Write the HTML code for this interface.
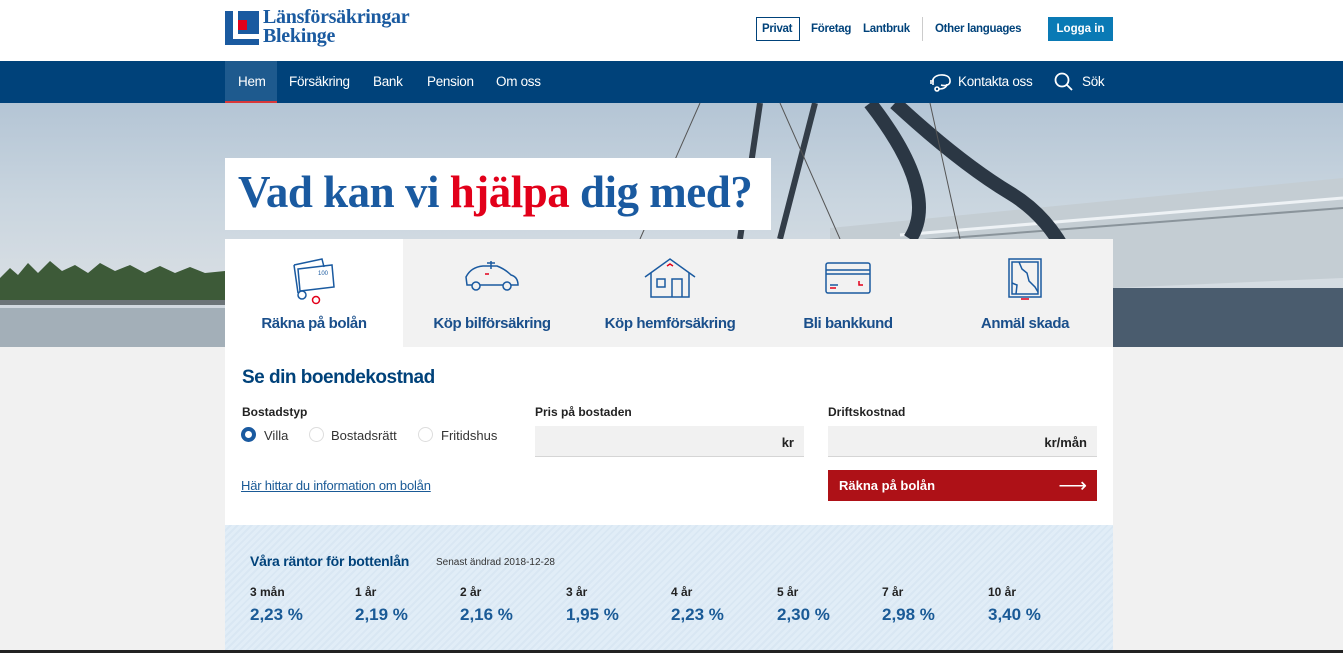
<!DOCTYPE html>
<html><head><meta charset="utf-8"><style>
*{margin:0;padding:0;box-sizing:border-box}
body{width:1343px;height:653px;overflow:hidden;background:#f1f1f1;font-family:"Liberation Sans",sans-serif;position:relative}
.abs{position:absolute}
.hdr{left:0;top:0;width:1343px;height:61px;background:#fff}
.nav{left:0;top:61px;width:1343px;height:42px;background:#00427a;color:#fff;font-size:13.5px}
.nav span{position:absolute;top:13px;letter-spacing:-0.3px}
.hero{left:0;top:103px;width:1343px;height:244px;background:linear-gradient(180deg,#b4c5d5 0%,#c9d5df 40%,#d6dde3 70%,#cbd3da 100%);overflow:hidden}
.tl{color:#00427a;font-weight:bold;font-size:11.5px;line-height:14px;top:22px;letter-spacing:-0.3px}
.tab{position:absolute;top:239px;height:108px;width:178px;background:#f2f2f2;text-align:center}
.tab b{position:absolute;left:0;right:0;top:76px;font-size:15px;color:#1a4f8b;letter-spacing:-0.4px}
.tab svg{position:absolute;left:50%;transform:translateX(-50%);top:18px}
.lbl{font-size:12px;font-weight:bold;color:#222}
.inp{background:#f1f1f1;border-bottom:1px solid #d5d5d5;height:31px;font-size:13px;font-weight:bold;color:#222;text-align:right;padding:9px 10px 0 0}
.rk{font-size:12px;font-weight:bold;color:#222;top:585px}
.rv{font-size:17px;font-weight:bold;color:#1a5a96;top:605px}
</style></head><body>
<div class="abs hdr">
  <svg class="abs" style="left:225px;top:11px" width="34" height="34" viewBox="0 0 34 34"><rect width="34" height="34" fill="#1a5aa0"/><rect x="8" y="0" width="5" height="28" fill="#fff"/><rect x="8" y="23" width="26" height="5" fill="#fff"/><rect x="13" y="9" width="9" height="10" fill="#e2001a"/></svg>
  <div class="abs" style="left:263px;top:8px;font-family:'Liberation Serif',serif;font-weight:bold;font-size:20px;line-height:19px;color:#1a5aa0;letter-spacing:-0.3px">Länsförsäkringar<br>Blekinge</div>
  <div class="abs" style="left:756px;top:17px;width:44px;height:24px;border:1px solid #00427a"></div>
  <span class="abs tl" style="left:762px">Privat</span>
  <span class="abs tl" style="left:811px">Företag</span>
  <span class="abs tl" style="left:863px">Lantbruk</span>
  <div class="abs" style="left:922px;top:17px;width:1px;height:24px;background:#ccc"></div>
  <span class="abs tl" style="left:935px">Other languages</span>
  <div class="abs" style="left:1048px;top:17px;width:65px;height:24px;background:#0a7ab5;color:#fff;font-size:11.5px;font-weight:bold;text-align:center;line-height:24px">Logga in</div>
</div>
<div class="abs nav">
  <div class="abs" style="left:225px;top:0;width:52px;height:42px;background:#1e5a8e;border-bottom:2px solid #d9383a"></div>
  <span style="left:238px">Hem</span><span style="left:289px">Försäkring</span><span style="left:373px">Bank</span><span style="left:427px">Pension</span><span style="left:496px">Om oss</span>
  <svg class="abs" style="left:929px;top:10px" width="24" height="22" viewBox="0 0 24 22" fill="none" stroke="#fff" stroke-width="1.6"><path d="M4 11 C2 3 20 1 21 9 C22 15 15 15 12 14"/><path d="M4 8 v6 M2 9 v4"/><circle cx="8" cy="18" r="2"/><path d="M10 18 C16 18 18 15 18 13"/></svg>
  <span style="left:958px">Kontakta oss</span>
  <svg class="abs" style="left:1054px;top:11px" width="20" height="20" viewBox="0 0 20 20" fill="none" stroke="#fff" stroke-width="1.8"><circle cx="8" cy="8" r="6.5"/><path d="M13 13 l5 5"/></svg>
  <span style="left:1082px">Sök</span>
</div>
<div class="abs hero">
  <svg width="1343" height="244" style="position:absolute;left:0;top:0">
    <rect x="0" y="205" width="1343" height="39" fill="#a3afb8"/>
    <path d="M0 175 L10 165 L18 172 L28 160 L38 170 L50 158 L62 168 L75 162 L88 170 L100 160 L115 168 L130 162 L145 170 L160 163 L175 170 L190 164 L205 170 L225 168 L225 200 L0 200Z" fill="#3d5a38"/>
    <rect x="0" y="197" width="225" height="5" fill="#6c7478"/>
    <rect x="1113" y="185" width="230" height="59" fill="#4a5c6e"/>
    <path d="M830 125 L1343 75 L1343 175 L1113 185 L830 140Z" fill="#c4cdd3"/>
    <path d="M900 132 L1343 95" stroke="#eef2f5" stroke-width="3"/>
    <path d="M910 138 L1343 105" stroke="#8a949b" stroke-width="2"/>
    <path d="M760 0 L740 136 M815 0 L780 136" stroke="#333d48" stroke-width="6"/>
    <path d="M870 0 Q940 90 910 136 M895 0 Q960 60 1010 90 Q1060 120 1080 185" stroke="#2b3744" stroke-width="14" fill="none"/>
    <path d="M700 0 L640 136 M780 0 L840 136 M930 0 L960 136" stroke="#555" stroke-width="1"/>
  </svg>
</div>
<div class="abs" style="left:225px;top:158px;width:546px;height:72px;background:#fff"></div>
<div class="abs" style="left:238px;top:166px;font-family:'Liberation Serif',serif;font-weight:bold;font-size:45px;letter-spacing:-0.5px;color:#1a5aa0;white-space:nowrap">Vad kan vi <span style="color:#e2001a">hjälpa</span> dig med?</div>

<div class="tab" style="left:225px;background:#fff">
<svg width="44" height="48" viewBox="0 0 44 48" fill="none" stroke="#1a5aa0" stroke-width="1.5"><path d="M2 8 L30 2 L32 10"/><path d="M6 12 L40 8 L42 30 L8 34Z"/><path d="M2 8 L6 36"/><circle cx="10" cy="38" r="4"/><circle cx="24" cy="43" r="3.5" stroke="#e2001a"/><text x="26" y="18" font-size="6" fill="#1a5aa0" stroke="none">100</text></svg>
<b>Räkna på bolån</b></div>
<div class="tab" style="left:403px">
<svg width="58" height="40" viewBox="0 0 58 40" fill="none" stroke="#1a5aa0" stroke-width="1.5"><path d="M4 28 L3 20 Q8 10 20 9 L34 9 Q42 12 48 18 Q55 20 55 28 Z"/><circle cx="13" cy="29" r="4" fill="#f2f2f2"/><circle cx="44" cy="29" r="4" fill="#f2f2f2"/><path d="M28 4 v8 M24 6 h8"/><path d="M22 17 h4" stroke="#e2001a"/></svg>
<b>Köp bilförsäkring</b></div>
<div class="tab" style="left:581px">
<svg width="56" height="42" viewBox="0 0 56 42" fill="none" stroke="#1a5aa0" stroke-width="1.5"><path d="M3 20 L28 2 L53 20"/><path d="M9 16 V40 H47 V16"/><rect x="15" y="22" width="8" height="8"/><path d="M30 40 V22 H40 V40"/><path d="M25 9 L28 7 L31 9" stroke="#e2001a"/></svg>
<b>Köp hemförsäkring</b></div>
<div class="tab" style="left:759px">
<svg width="50" height="40" viewBox="0 0 50 40" fill="none" stroke="#1a5aa0" stroke-width="1.5"><rect x="3" y="6" width="44" height="30" rx="2"/><path d="M3 13 H47 M3 17 H47"/><path d="M7 28 H15"/><path d="M7 31 H13 M36 24 V28 H40" stroke="#e2001a"/></svg>
<b>Bli bankkund</b></div>
<div class="tab" style="left:937px;width:176px">
<svg width="40" height="48" viewBox="0 0 40 48" fill="none" stroke="#1a5aa0" stroke-width="1.5"><rect x="4" y="2" width="32" height="38"/><rect x="7" y="5" width="26" height="32"/><path d="M14 5 L17 12 L22 16 L24 24 L30 30 L33 35"/><path d="M7 26 L12 28 L11 37"/><path d="M16 42 H24" stroke="#e2001a"/></svg>
<b>Anmäl skada</b></div>

<div class="abs" style="left:225px;top:347px;width:888px;height:178px;background:#fff"></div>
<div class="abs" style="left:242px;top:367px;font-size:19px;font-weight:bold;color:#00427a;letter-spacing:-0.5px">Se din boendekostnad</div>
<div class="abs lbl" style="left:242px;top:405px">Bostadstyp</div>
<div class="abs" style="left:241px;top:427px;width:15px;height:15px;border-radius:50%;border:4px solid #1a5aa0"></div>
<div class="abs" style="left:264px;top:428px;font-size:13px;color:#333">Villa</div>
<div class="abs" style="left:309px;top:427px;width:15px;height:15px;border-radius:50%;border:1px solid #ddd"></div>
<div class="abs" style="left:331px;top:428px;font-size:13px;color:#333">Bostadsrätt</div>
<div class="abs" style="left:418px;top:427px;width:15px;height:15px;border-radius:50%;border:1px solid #ddd"></div>
<div class="abs" style="left:441px;top:428px;font-size:13px;color:#333">Fritidshus</div>
<div class="abs" style="left:241px;top:478px;font-size:13px;color:#1a5a96;text-decoration:underline;letter-spacing:-0.2px">Här hittar du information om bolån</div>
<div class="abs lbl" style="left:535px;top:405px">Pris på bostaden</div>
<div class="abs inp" style="left:535px;top:426px;width:269px">kr</div>
<div class="abs lbl" style="left:828px;top:405px">Driftskostnad</div>
<div class="abs inp" style="left:828px;top:426px;width:269px">kr/mån</div>
<div class="abs" style="left:828px;top:470px;width:269px;height:31px;background:#ae1117;color:#fff;font-size:13px;font-weight:bold;padding:8px 0 0 11px">Räkna på bolån<span style="position:absolute;right:10px;top:3px;font-size:20px;font-weight:normal">⟶</span></div>

<div class="abs" style="left:225px;top:525px;width:888px;height:125px;background:repeating-linear-gradient(135deg,#e1edf7 0 3px,#d9e7f3 3px 5px)"></div>
<div class="abs" style="left:250px;top:553px;font-size:14px;font-weight:bold;color:#00427a;letter-spacing:-0.2px">Våra räntor för bottenlån</div>
<div class="abs" style="left:436px;top:557px;font-size:10px;color:#333">Senast ändrad 2018-12-28</div>
<div class="abs rk" style="left:250px">3 mån</div><div class="abs rv" style="left:250px">2,23 %</div>
<div class="abs rk" style="left:355px">1 år</div><div class="abs rv" style="left:355px">2,19 %</div>
<div class="abs rk" style="left:460px">2 år</div><div class="abs rv" style="left:460px">2,16 %</div>
<div class="abs rk" style="left:566px">3 år</div><div class="abs rv" style="left:566px">1,95 %</div>
<div class="abs rk" style="left:671px">4 år</div><div class="abs rv" style="left:671px">2,23 %</div>
<div class="abs rk" style="left:777px">5 år</div><div class="abs rv" style="left:777px">2,30 %</div>
<div class="abs rk" style="left:882px">7 år</div><div class="abs rv" style="left:882px">2,98 %</div>
<div class="abs rk" style="left:988px">10 år</div><div class="abs rv" style="left:988px">3,40 %</div>
<div class="abs" style="left:0;top:650px;width:1343px;height:3px;background:#222"></div>
</body></html>
